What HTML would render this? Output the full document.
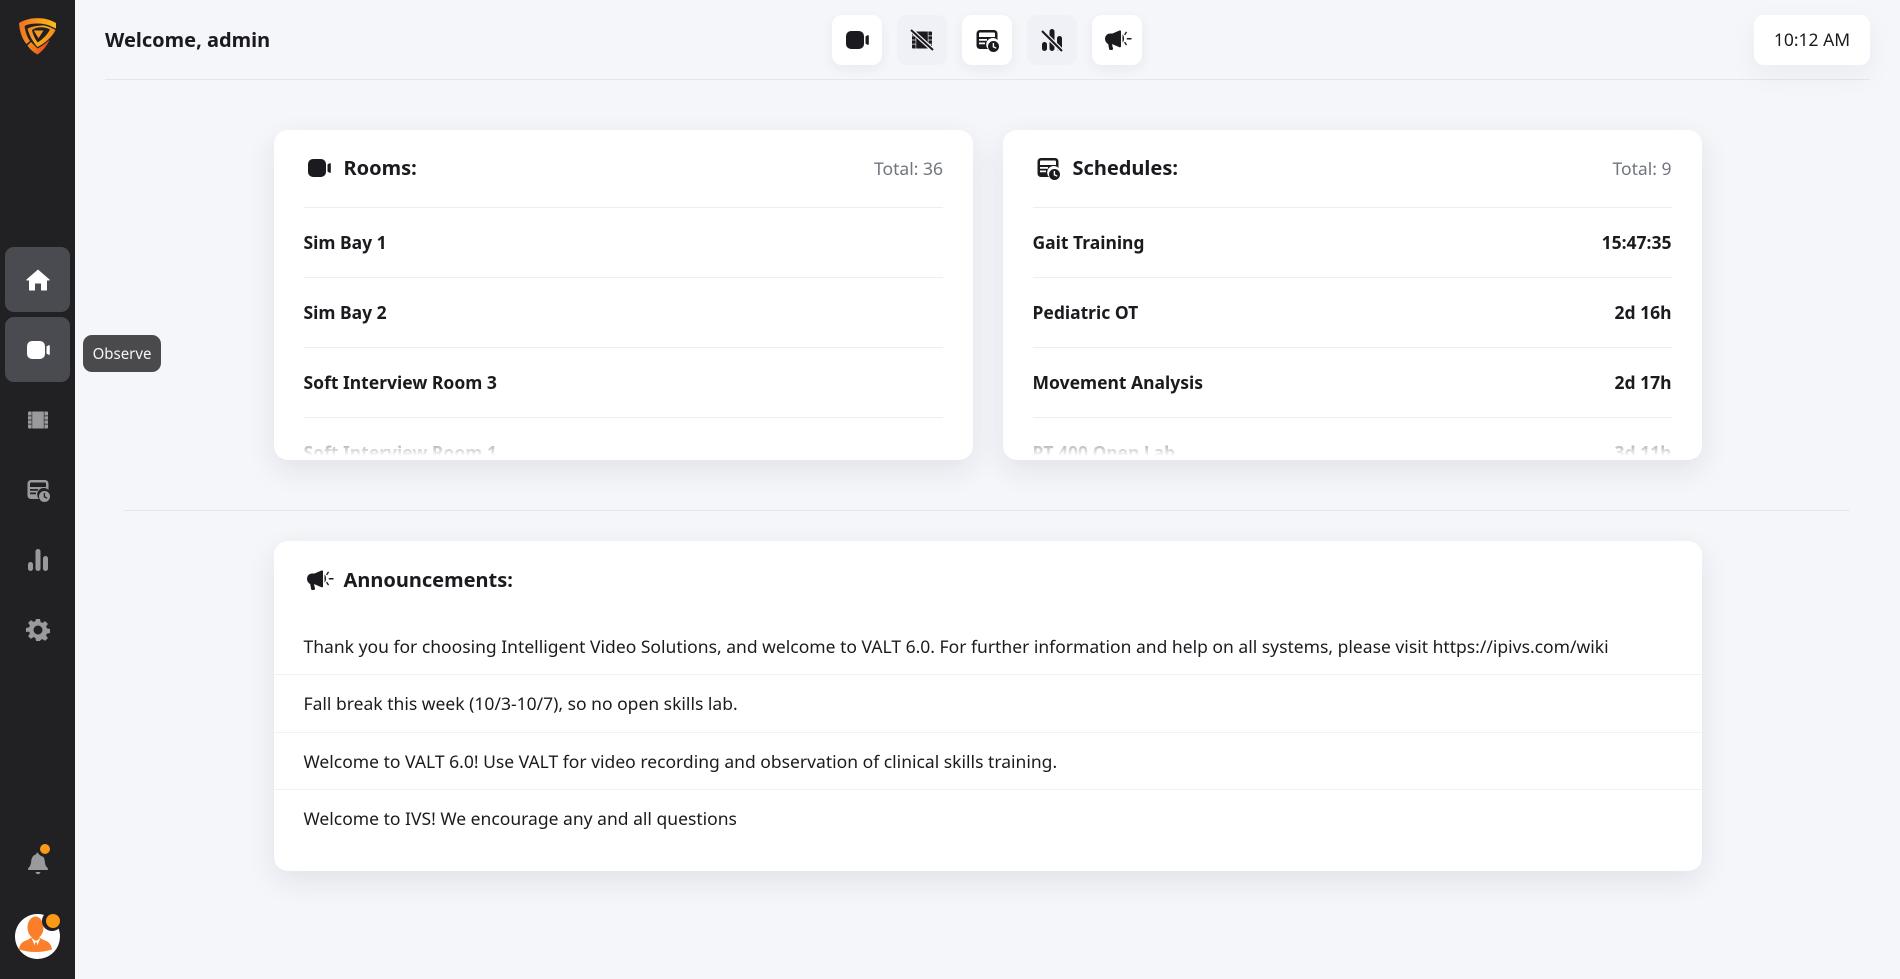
<!DOCTYPE html>
<html lang="en"><head><meta charset="utf-8"><title>Dashboard</title>
<style>
*{box-sizing:border-box;margin:0;padding:0}
html,body{width:1900px;height:979px;overflow:hidden;background:#f4f6fa}
body{position:relative;font-family:"Noto Sans","Noto Sans CJK JP","Liberation Sans",sans-serif;color:#1b1b1f}
.a{position:absolute}
.t{position:absolute;white-space:nowrap;line-height:24px}
.side{left:0;top:0;width:75px;height:979px;background:#212124}
.nav{left:5px;width:65px;height:65px;border-radius:9px;background:#4a4b50}
.hb{top:15px;width:50px;height:50px;border-radius:10px;background:#fff;box-shadow:0 4px 12px rgba(30,30,50,.06)}
.hb.off{background:#eff1f6;box-shadow:none}
.hb svg{position:absolute;left:13px;top:13px}
.card{background:#fff;border-radius:14px;box-shadow:0 10px 30px rgba(30,30,50,.09)}
.ln{height:1px;background:#eceef1}
.h{font-size:20px;font-weight:700}
.r{font-size:17.5px;font-weight:700}
.n{font-size:17.5px}
.ttl{font-size:17.5px;color:#6f767d}
</style></head><body>
<svg width="0" height="0" style="position:absolute"><defs>
<linearGradient id="lg" gradientUnits="userSpaceOnUse" x1="0" y1="5" x2="37" y2="12"><stop offset="0" stop-color="#f26f21"/><stop offset=".55" stop-color="#f99d1c"/><stop offset="1" stop-color="#fcc015"/></linearGradient>
<linearGradient id="lg2" gradientUnits="userSpaceOnUse" x1="9" y1="10" x2="36" y2="22"><stop offset="0" stop-color="#f58220"/><stop offset=".5" stop-color="#fbb017"/><stop offset="1" stop-color="#f47a20"/></linearGradient>
<linearGradient id="lg3" gradientUnits="userSpaceOnUse" x1="9" y1="25" x2="30" y2="33"><stop offset="0" stop-color="#f7941d"/><stop offset="1" stop-color="#e4411f"/></linearGradient>
<symbol id="video" viewBox="0 0 24 24"><rect x="1" y="3" width="18" height="18" rx="5"/><path d="M20.500 8.500l2-1.300c.6-.3 1.300.1 1.300.8v8c0 .7-.7 1.100-1.300.8l-2-1.300z"/></symbol>
<symbol id="film" viewBox="0 0 24 24"><path d="M6.200 3.500h11.600v17H6.200zM2 4.500a1 1 0 0 1 1-1h2.600v4H2zM2 8.300h3.600v3.300H2zM2 12.400h3.600v3.300H2zM2 16.500h3.600v4H3a1 1 0 0 1-1-1zM18.400 3.500H21a1 1 0 0 1 1 1v3h-3.600zM18.400 8.300H22v3.300h-3.600zM18.400 12.400H22v3.300h-3.600zM18.400 16.500H22v3a1 1 0 0 1-1 1h-2.600z"/></symbol>
<symbol id="sched" viewBox="0 0 24 24"><path fill-rule="evenodd" d="M5 2h14a3.500 3.500 0 0 1 3.500 3.500V12a6.500 6.500 0 0 0-9.500 9H5a3.500 3.500 0 0 1-3.500-3.500v-12A3.500 3.500 0 0 1 5 2zM4 5.500V9h16V5.500a1 1 0 0 0-1-1H5a1 1 0 0 0-1 1zM4 11v1.800h8V11zM4 14.500v1.800h6v-1.800z"/><path fill-rule="evenodd" d="M18.500 13a5.500 5.500 0 1 1 0 11 5.500 5.500 0 0 1 0-11zm-.8 2v4.300l3.200 1.500.6-1.200-2.400-1.200V15z"/></symbol>
<symbol id="chart" viewBox="0 0 24 24"><rect x="2" y="14" width="5" height="9" rx="2.500"/><rect x="9.500" y="1" width="5" height="22" rx="2.500"/><rect x="17" y="8" width="5" height="15" rx="2.500"/></symbol>
<symbol id="mega" viewBox="0 0 28 22"><path d="M1 9.500A5 5 0 0 1 6 4.500h2.500L15.500 1.500c.6-.3 1.500.2 1.500.9v15c0 .7-.9 1.200-1.500.9l-7-3H8l1 4.200c.2.800-.4 1.500-1.200 1.500H6.300c-.6 0-1.100-.4-1.200-1l-.9-5C2.300 14 1 12 1 9.500z"/><path d="M22 2.500l1.100.7-2 3-1.100-.7zM22.800 9h4.700v1.500h-4.700zM21.100 12.800l2 3-1.100.7-2-3zM18.500 5.500c1 .7 1.500 2.300 1.500 4s-.5 3.300-1.500 4z"/></symbol>
</defs></svg>

<div class="a side"></div>
<svg class="a" style="left:19px;top:18px" width="37" height="37" viewBox="0 0 37 37">
<path fill="url(#lg)" d="M0 5C11-1.500 26-1.500 37 5v5.500C26 5 12 5 5.500 8.500 6.500 14 8 19 11 23l-3.500 3C3 21 .5 13 0 5z"/>
<path fill="url(#lg2)" d="M8.500 10.500c4-2.500 8-3.500 11-3.500 6 0 12 2 17 5-2.500 6-10 13-18 17C14 24 10 17 8.500 10.500zM13 12c.8 4.500 3 9 5.700 12.500C24 21 28.500 16.500 31 11.500 25.500 8.500 18 8.500 13 12z"/>
<path fill="#212124" d="M6 7.500C13 5 24 4.500 33 8.500 26 6.700 15 7.500 9 10.500z"/>
<path fill="#f79a1b" d="M14.800 12.500h9.700l-5 7.800z"/>
<path fill="url(#lg3)" d="M8.500 27.500l3.500-3.500 6.500 6.500c4-2 8.500-5.500 12-8.500-2.500 6-7 11-12 14.500-4.200-2.200-7.700-5.500-10-9z"/>
</svg>

<div class="a nav" style="top:247px"></div>
<div class="a nav" style="top:317px"></div>
<svg class="a" style="left:26px;top:268px" width="24" height="24" viewBox="0 0 24 24" fill="#fff"><path d="M12 1.500l11.500 10c.4.400.1 1-.4 1H21v9.500a.5.500 0 0 1-.5.500H15v-7H9v7H3.500A.5.500 0 0 1 3 22v-9.500H.9c-.5 0-.8-.6-.4-1z"/></svg>
<svg class="a" style="left:26px;top:338px;fill:#fff" width="24" height="24"><use href="#video"/></svg>
<svg class="a" style="left:26px;top:408px;fill:#9a9a9c" width="24" height="24"><use href="#film"/></svg>
<svg class="a" style="left:26px;top:478px;fill:#9a9a9c" width="24" height="24"><use href="#sched"/></svg>
<svg class="a" style="left:26px;top:548px;fill:#9a9a9c" width="24" height="24"><use href="#chart"/></svg>
<svg class="a" style="left:26px;top:618px" width="24" height="24" viewBox="0 0 24 24" fill="#9a9a9c"><path fill-rule="evenodd" d="M10 1h4l.6 3.100 1.900.8 2.600-1.800 2.800 2.800-1.800 2.600.8 1.900 3.100.6v4l-3.100.6-.8 1.900 1.800 2.600-2.800 2.800-2.600-1.800-1.900.8L14 23h-4l-.6-3.100-1.900-.8-2.600 1.800-2.800-2.800 1.800-2.600-.8-1.900L0 14v-4l3.100-.6.8-1.900-1.800-2.600 2.800-2.800 2.600 1.800 1.900-.8zM12 7.500a4.500 4.500 0 1 0 0 9 4.500 4.500 0 0 0 0-9z"/></svg>

<div class="a" style="left:83px;top:335px;width:78px;height:37px;border-radius:9px;background:#4a4a4c"></div>
<div class="t" style="left:83px;top:342px;width:78px;text-align:center;font-size:15px;color:#f4f4f4">Observe</div>

<svg class="a" style="left:27px;top:852px" width="22" height="24" viewBox="0 0 22 24" fill="#9a9a9c"><path d="M11 .5c1 0 1.800.8 1.800 1.800 3.200.8 4.700 3.500 5 7 .2 3 1 5.200 3 7 .6.600.3 1.700-.6 1.700H1.800c-.9 0-1.200-1.100-.6-1.700 2-1.800 2.800-4 3-7 .3-3.500 1.800-6.200 5-7C9.200 1.300 10 .5 11 .5zM8.500 20h5c-.3 1.300-1.300 2.200-2.500 2.200S8.800 21.300 8.500 20z"/></svg>
<div class="a" style="left:37px;top:841px;width:16px;height:16px;border-radius:50%;background:#212124"></div>
<div class="a" style="left:40px;top:844px;width:10px;height:10px;border-radius:50%;background:#fb9a14"></div>
<svg class="a" style="left:15px;top:914px" width="45" height="45" viewBox="0 0 45 45">
<circle cx="22.500" cy="22.500" r="22.500" fill="#fff"/>
<ellipse cx="20.500" cy="13.500" rx="8" ry="11" fill="#fb7f2b"/>
<path fill="#fb7f2b" d="M4 35.500c.5-5 3-8 8.500-9.500l4-2.500h8l4 2.500c5.500 1.500 8 4.500 8.500 9.500-5 1.500-11 2.500-16.500 2.500S9 37 4 35.500z"/>
<path fill="#fff" d="M16.500 24l4.500 10.500L25.500 24l-4.500 3z"/>
<path fill="#fb7f2b" d="M20 28.500h2l.6 5-1.600 2-1.600-2z"/>
</svg>
<div class="a" style="left:42px;top:911px;width:20px;height:20px;border-radius:50%;background:#212124"></div>
<div class="a" style="left:46px;top:914px;width:14px;height:14px;border-radius:50%;background:#fb9a14"></div>

<div class="t" style="left:105px;top:28px;font-size:20px;font-weight:700">Welcome, admin</div>
<div class="a ln" style="left:105px;top:79px;width:1765px;background:#e4e6eb"></div>
<div class="a hb" style="left:832px"><svg width="24" height="24" fill="#1b1b1f"><use href="#video"/></svg></div>
<div class="a hb off" style="left:897px"><svg width="24" height="24" fill="#1b1b1f"><use href="#film"/><path d="M1 2L23 22" stroke="#eff1f6" stroke-width="4.500"/><path d="M1 2L23 22" stroke="#1b1b1f" stroke-width="2"/></svg></div>
<div class="a hb" style="left:962px"><svg width="24" height="24" fill="#1b1b1f"><use href="#sched"/></svg></div>
<div class="a hb off" style="left:1027px"><svg width="24" height="24" fill="#1b1b1f"><use href="#chart"/><path d="M2 3L22 23" stroke="#eff1f6" stroke-width="4.500"/><path d="M2 3L22 23" stroke="#1b1b1f" stroke-width="2"/></svg></div>
<div class="a hb" style="left:1092px"><svg style="left:12px;top:14px" width="28" height="22" fill="#1b1b1f"><use href="#mega"/></svg></div>
<div class="a" style="left:1754px;top:15px;width:116px;height:50px;border-radius:10px;background:#fff;box-shadow:0 10px 30px rgba(30,30,50,.05)"></div>
<div class="t" style="left:1754px;top:28px;width:116px;text-align:center;font-size:17.500px">10:12 AM</div>

<div class="a card" style="left:274px;top:130px;width:699px;height:330px"></div>
<svg class="a" style="left:306.500px;top:156px" width="24" height="24" fill="#1b1b1f"><use href="#video"/></svg>
<div class="t h" style="left:343.500px;top:156px">Rooms:</div>
<div class="t ttl" style="right:957px;top:157px">Total: 36</div>
<div class="a ln" style="left:304px;top:207px;width:639px"></div>
<div class="t r" style="left:303.500px;top:231px">Sim Bay 1</div>
<div class="a ln" style="left:304px;top:277px;width:639px"></div>
<div class="t r" style="left:303.500px;top:301px">Sim Bay 2</div>
<div class="a ln" style="left:304px;top:347px;width:639px"></div>
<div class="t r" style="left:303.500px;top:371px">Soft Interview Room 3</div>
<div class="a ln" style="left:304px;top:417px;width:639px"></div>
<div class="a" style="left:303.500px;top:438px;height:18px;width:639px;overflow:hidden;-webkit-mask-image:linear-gradient(#0008,#0000)"><div class="t r" style="left:0;top:3px">Soft Interview Room 1</div></div>

<div class="a card" style="left:1003px;top:130px;width:699px;height:330px"></div>
<svg class="a" style="left:1036px;top:156px" width="24" height="24" fill="#1b1b1f"><use href="#sched"/></svg>
<div class="t h" style="left:1072.500px;top:156px">Schedules:</div>
<div class="t ttl" style="right:228.500px;top:157px">Total: 9</div>
<div class="a ln" style="left:1033px;top:207px;width:639px"></div>
<div class="t r" style="left:1032.500px;top:231px">Gait Training</div>
<div class="t r" style="right:228.500px;top:231px">15:47:35</div>
<div class="a ln" style="left:1033px;top:277px;width:639px"></div>
<div class="t r" style="left:1032.500px;top:301px">Pediatric OT</div>
<div class="t r" style="right:228.500px;top:301px">2d 16h</div>
<div class="a ln" style="left:1033px;top:347px;width:639px"></div>
<div class="t r" style="left:1032.500px;top:371px">Movement Analysis</div>
<div class="t r" style="right:228.500px;top:371px">2d 17h</div>
<div class="a ln" style="left:1033px;top:417px;width:639px"></div>
<div class="a" style="left:1032.500px;top:438px;height:18px;width:639px;overflow:hidden;-webkit-mask-image:linear-gradient(#0008,#0000)"><div class="t r" style="left:0;top:3px">PT 400 Open Lab</div><div class="t r" style="right:0;top:3px">3d 11h</div></div>

<div class="a ln" style="left:124px;top:510px;width:1726px;background:#e4e6eb"></div>

<div class="a card" style="left:274px;top:541px;width:1428px;height:330px"></div>
<svg class="a" style="left:306px;top:569px" width="28" height="22" fill="#1b1b1f"><use href="#mega"/></svg>
<div class="t h" style="left:343.500px;top:568px">Announcements:</div>
<div class="t n" style="left:303.500px;top:635px">Thank you for choosing Intelligent Video Solutions, and welcome to VALT 6.0. For further information and help on all systems, please visit https://ipivs.com/wiki</div>
<div class="a ln" style="left:274px;top:674px;width:1428px;background:#f1f2f4"></div>
<div class="t n" style="left:303.500px;top:692px">Fall break this week (10/3-10/7), so no open skills lab.</div>
<div class="a ln" style="left:274px;top:732px;width:1428px;background:#f1f2f4"></div>
<div class="t n" style="left:303.500px;top:750px">Welcome to VALT 6.0! Use VALT for video recording and observation of clinical skills training.</div>
<div class="a ln" style="left:274px;top:789px;width:1428px;background:#f1f2f4"></div>
<div class="t n" style="left:303.500px;top:807px">Welcome to IVS! We encourage any and all questions</div>
</body></html>
